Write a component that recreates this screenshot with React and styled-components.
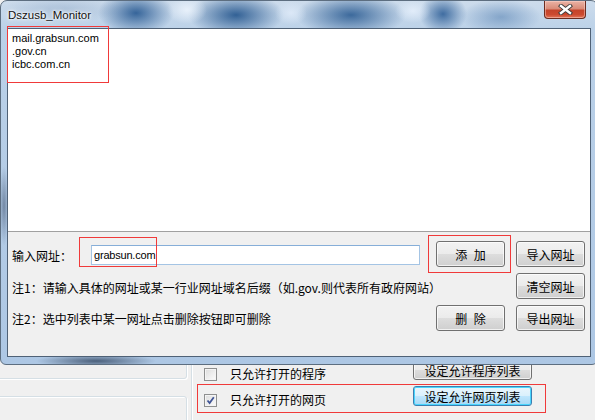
import styled, { createGlobalStyle } from "styled-components"

const CJK = `"Noto Sans CJK SC", "Liberation Sans", sans-serif`

const GlobalStyle = createGlobalStyle`
  html, body {
    margin: 0;
    padding: 0;
  }
  body {
    background: #f0f0f0;
    font-family: "Liberation Sans", "Noto Sans CJK SC", sans-serif;
  }
`

const Desktop = styled.div`
  position: relative;
  width: 595px;
  height: 420px;
  overflow: hidden;
  background: #f0f0f0;
`

/* ---------- window behind the dialog ---------- */

const BackWindow = styled.div`
  position: absolute;
  left: -10px;
  top: 0;
  width: 615px;
  height: 420px;
  box-sizing: border-box;
  padding-top: 300px;
  display: grid;
  grid-template-columns: 197px 1fr;
  column-gap: 4px;
  background: #f0f0f0;
  font: 12px ${CJK};
  color: #000;
`

const LeftStack = styled.div`
  display: flex;
  flex-direction: column;
  gap: 17px;
`

const GroupBox = styled.div`
  box-sizing: border-box;
  height: ${(p) => p.$h}px;
  border: 1px solid #d5dfe5;
  border-radius: 3px;
  box-shadow: inset 1px 1px 0 #fff, 1px 1px 0 #fff;
  display: flex;
  flex-direction: column;
  justify-content: flex-end;
  padding: 0 0 13px 34px;
`

const RightGroup = styled.div`
  box-sizing: border-box;
  border: 1px solid #d5dfe5;
  border-right: none;
  border-radius: 3px 0 0 0;
  box-shadow: inset 1px 1px 0 #fff;
  padding: 59px 0 0 12px;
  display: grid;
  grid-template-columns: 209px 119px;
  align-items: start;
`

const Options = styled.div`
  display: flex;
  flex-direction: column;
  padding-top: 1px;
`

const OptionRow = styled.div`
  height: 26px;
  display: flex;
  align-items: center;
  gap: 13px;
  line-height: 1;
`

const SideButtons = styled.div`
  display: flex;
  flex-direction: column;
  gap: 6px;
`

const CheckBox = styled.span`
  flex: none;
  position: relative;
  width: 13px;
  height: 13px;
  box-sizing: border-box;
  border: 1px solid #8e8f8f;
  background: linear-gradient(135deg, #dcdcdc 0%, #f0f0f0 60%, #fcfcfc 100%);
  box-shadow: inset 0 0 0 1px #f4f4f4;
  svg {
    position: absolute;
    left: 1px;
    top: 1px;
  }
`

const Check = ({ checked }) => (
  <CheckBox>
    {checked && (
      <svg width="9" height="9" viewBox="0 0 9 9">
        <path d="M1.5 4.5 L3.6 7 L7.8 1.2" fill="none" stroke="#3f5495" strokeWidth="1.8" />
      </svg>
    )}
  </CheckBox>
)

/* ---------- dialog ---------- */

const Dialog = styled.div`
  position: absolute;
  left: 0;
  top: 0;
  width: 598px;
  height: 365px;
  box-sizing: border-box;
  border: 1px solid #5d6e80;
  border-radius: 7px 7px 6px 6px;
  padding: 0 6px 7px 6px;
  display: flex;
  flex-direction: column;
  background:
    radial-gradient(ellipse 20px 14px at 186px 9px, rgba(235, 243, 252, 0.9), transparent),
    radial-gradient(ellipse 16px 12px at 290px 12px, rgba(225, 236, 250, 0.8), transparent),
    radial-gradient(ellipse 18px 12px at 412px 10px, rgba(230, 240, 252, 0.85), transparent),
    radial-gradient(ellipse 38px 22px at 135px 12px, rgba(38, 88, 145, 0.9), transparent),
    radial-gradient(ellipse 48px 22px at 235px 14px, rgba(34, 84, 140, 0.9), transparent),
    radial-gradient(ellipse 55px 22px at 350px 14px, rgba(36, 86, 142, 0.85), transparent),
    radial-gradient(ellipse 24px 20px at 442px 13px, rgba(40, 90, 148, 0.85), transparent),
    radial-gradient(ellipse 40px 18px at 500px 16px, rgba(80, 125, 175, 0.55), transparent),
    radial-gradient(ellipse 60px 14px at 60px 8px, rgba(120, 150, 185, 0.35), transparent),
    radial-gradient(ellipse 60px 7px at 95px 360px, rgba(58, 78, 105, 0.85), transparent),
    radial-gradient(ellipse 5px 40px at 3px 205px, rgba(70, 90, 120, 0.6), transparent),
    linear-gradient(180deg, #cddcec 0%, #bbd1e8 8%, #adc7e4 100%);
`

const TitleBar = styled.div`
  height: 27px;
  flex: none;
  display: flex;
  align-items: center;
  justify-content: space-between;
  padding-left: 1px;
`

const Title = styled.span`
  font: 11.5px "Liberation Sans", sans-serif;
  color: #111;
  text-shadow: 0 0 6px #fff, 0 0 3px #fff, 0 0 2px rgba(255, 255, 255, 0.9);
`

const CloseButton = styled.div`
  align-self: flex-start;
  margin-right: 5px;
  width: 42px;
  height: 18px;
  box-sizing: border-box;
  border: 1px solid #6b2c20;
  border-top: none;
  border-radius: 0 0 4px 4px;
  background: linear-gradient(180deg, #ebb3a5 0%, #d98c79 45%, #c4432a 55%, #cc4a2f 80%, #e2765b 100%);
  box-shadow: inset 0 0 0 1px rgba(255, 220, 210, 0.45);
  display: flex;
  align-items: center;
  justify-content: center;
`

const CloseIcon = () => (
  <svg width="15" height="11" viewBox="0 0 15 11">
    <path d="M3 2 L12 9 M12 2 L3 9" stroke="#3a3a3a" strokeWidth="4.2" strokeLinecap="square" />
    <path d="M3 2 L12 9 M12 2 L3 9" stroke="#fff" strokeWidth="2.4" strokeLinecap="square" />
  </svg>
)

const Client = styled.div`
  flex: 1;
  display: flex;
  flex-direction: column;
  border: 1px solid #4f6176;
  background: #f0f0f0;
`

const UrlList = styled.div`
  height: 203px;
  flex: none;
  box-sizing: border-box;
  background: #fff;
  border-bottom: 1px solid #a0a0a0;
  padding: 3px 4px;
  font: 11px/13px "Liberation Sans", sans-serif;
  color: #000;
`

const Panel = styled.div`
  flex: 1;
  display: grid;
  grid-template-columns: 1fr 69px 69px;
  grid-template-rows: 26px 26px 26px;
  column-gap: 11px;
  row-gap: 6px;
  padding: 9px 5px 0 4px;
  font: 12px ${CJK};
  color: #000;
`

const InputRow = styled.div`
  display: flex;
  align-items: center;
  padding-top: 2px;
`

const Label = styled.span`
  width: 79px;
`

const TextBox = styled.div`
  width: 329px;
  height: 20px;
  box-sizing: border-box;
  border: 1px solid #a4c4e4;
  border-top-color: #86aed8;
  background: #fff;
  padding-left: 2px;
  display: flex;
  align-items: center;
  font: 11px "Liberation Sans", sans-serif;
  letter-spacing: -0.2px;
`

const Note = styled.div`
  grid-column: ${(p) => p.$span || "auto"};
  align-self: center;
  padding-top: ${(p) => p.$pt || 0}px;
  white-space: nowrap;
`

const WinButton = styled.div`
  grid-column: ${(p) => p.$col};
  grid-row: ${(p) => p.$row};
  height: ${(p) => p.$h || 26}px;
  box-sizing: border-box;
  border: 1px solid ${(p) => (p.$focus ? "#3c7fb1" : "#707070")};
  border-radius: 3px;
  background: ${(p) =>
    p.$focus
      ? "linear-gradient(180deg, #eaf6fd 0%, #d9f0fc 50%, #bee6fd 51%, #a7d9f5 100%)"
      : "linear-gradient(180deg, #f2f2f2 0%, #ebebeb 50%, #dddddd 51%, #cfcfcf 100%)"};
  box-shadow: inset 0 0 0 1px ${(p) => (p.$focus ? "#48d5fd" : "rgba(255,255,255,0.7)")};
  display: flex;
  align-items: center;
  justify-content: center;
  font: 12px ${CJK};
  color: #000;
  word-spacing: 4px;
  white-space: pre;
`

/* ---------- red annotation boxes ---------- */

const Mark = styled.div`
  position: absolute;
  left: ${(p) => p.$x}px;
  top: ${(p) => p.$y}px;
  width: ${(p) => p.$w}px;
  height: ${(p) => p.$h}px;
  box-sizing: border-box;
  border: 1px solid #f03a3a;
  pointer-events: none;
`

const urls = ["mail.grabsun.com", ".gov.cn", "icbc.com.cn"]

export default function App() {
  return (
    <>
      <GlobalStyle />
      <Desktop>
        <BackWindow>
          <LeftStack>
            <GroupBox $h={79}>
              <OptionRow>
                <Check />
                <span>禁用可移动存储器(?)</span>
              </OptionRow>
            </GroupBox>
            <GroupBox $h={100} />
          </LeftStack>
          <RightGroup>
            <Options>
              <OptionRow>
                <Check />
                <span>只允许打开的程序</span>
              </OptionRow>
              <OptionRow>
                <Check checked />
                <span>只允许打开的网页</span>
              </OptionRow>
            </Options>
            <SideButtons>
              <WinButton $h={20}>设定允许程序列表</WinButton>
              <WinButton $h={20} $focus>设定允许网页列表</WinButton>
            </SideButtons>
          </RightGroup>
        </BackWindow>

        <Dialog>
          <TitleBar>
            <Title>Dszusb_Monitor</Title>
            <CloseButton>
              <CloseIcon />
            </CloseButton>
          </TitleBar>
          <Client>
            <UrlList>
              {urls.map((u) => (
                <div key={u}>{u}</div>
              ))}
            </UrlList>
            <Panel>
              <InputRow>
                <Label>输入网址：</Label>
                <TextBox>grabsun.com</TextBox>
              </InputRow>
              <WinButton $col={2} $row={1}>添 加</WinButton>
              <WinButton $col={3} $row={1}>导入网址</WinButton>
              <Note $span="1 / 3" $pt={3}>注1：请输入具体的网址或某一行业网址域名后缀（如.gov.则代表所有政府网站）</Note>
              <WinButton $col={3} $row={2}>清空网址</WinButton>
              <Note>注2：选中列表中某一网址点击删除按钮即可删除</Note>
              <WinButton $col={2} $row={3}>删 除</WinButton>
              <WinButton $col={3} $row={3}>导出网址</WinButton>
            </Panel>
          </Client>
        </Dialog>

        <Mark $x={7} $y={26} $w={102} $h={57} />
        <Mark $x={79} $y={237} $w={78} $h={30} />
        <Mark $x={428} $y={235} $w={83} $h={38} />
        <Mark $x={197} $y={384} $w={349} $h={29} />
      </Desktop>
    </>
  )
}
